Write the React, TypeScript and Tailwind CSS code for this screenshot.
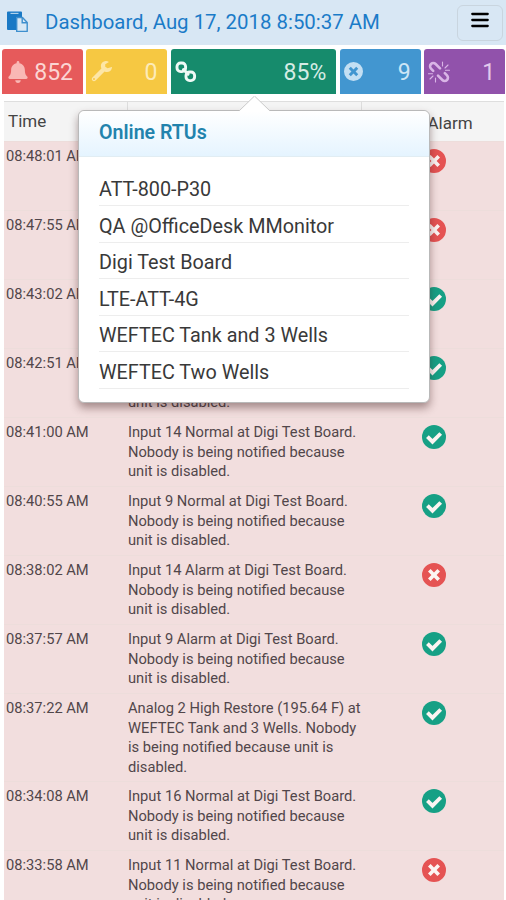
import type { ReactNode } from 'react';
import { FaBell } from 'react-icons/fa';

type Entry = {
    time: string;
    lines: string[];
    ok: boolean;
    height: string;
}

const disabled = ['Nobody is being notified because', 'unit is disabled.'];

const entries: Entry[] = [
    { time: '08:48:01 AM', lines: ['Input 15 Alarm at Digi Test Board.', ...disabled], ok: false, height: 'h-[69px]' },
    { time: '08:47:55 AM', lines: ['Input 12 Alarm at Digi Test Board.', ...disabled], ok: false, height: 'h-[69px]' },
    { time: '08:43:02 AM', lines: ['Input 15 Normal at Digi Test Board.', ...disabled], ok: true, height: 'h-[69px]' },
    { time: '08:42:51 AM', lines: ['Input 12 Normal at Digi Test Board.', ...disabled], ok: true, height: 'h-[69px]' },
    { time: '08:41:00 AM', lines: ['Input 14 Normal at Digi Test Board.', ...disabled], ok: true, height: 'h-[69px]' },
    { time: '08:40:55 AM', lines: ['Input 9 Normal at Digi Test Board.', ...disabled], ok: true, height: 'h-[69px]' },
    { time: '08:38:02 AM', lines: ['Input 14 Alarm at Digi Test Board.', ...disabled], ok: false, height: 'h-[69px]' },
    { time: '08:37:57 AM', lines: ['Input 9 Alarm at Digi Test Board.', ...disabled], ok: true, height: 'h-[69px]' },
    { time: '08:37:22 AM', lines: ['Analog 2 High Restore (195.64 F) at', 'WEFTEC Tank and 3 Wells. Nobody', 'is being notified because unit is', 'disabled.'], ok: true, height: 'h-[88px]' },
    { time: '08:34:08 AM', lines: ['Input 16 Normal at Digi Test Board.', ...disabled], ok: true, height: 'h-[69px]' },
    { time: '08:33:58 AM', lines: ['Input 11 Normal at Digi Test Board.', ...disabled], ok: false, height: 'h-[69px]' },
];

const rtus = ['ATT-800-P30', 'QA @OfficeDesk MMonitor', 'Digi Test Board', 'LTE-ATT-4G', 'WEFTEC Tank and 3 Wells', 'WEFTEC Two Wells'];

function PasteIcon() {
    return (
        <svg viewBox="0 0 22 22" className="mb-[2px] h-[22px] w-[22px]">
            <path d="M1 .5h13a1 1 0 0 1 1 1V6H9v13H1a1 1 0 0 1-1-1V1.500a1 1 0 0 1 1-1Z" fill="#1979c5" />
            <path d="M3.5 2.4h8" stroke="#b9d7ee" strokeWidth="1.1" />
            <path d="M9.700 6.500h5.800l4.700 4.900v9H9.700Z" fill="#d8e8f5" stroke="#3e8fce" strokeWidth="1.4" strokeLinejoin="round" />
            <path d="M15.200 6.500v5.200h5" fill="none" stroke="#3e8fce" strokeWidth="1.4" />
        </svg>
    );
}

function WrenchIcon() {
    return (
        <svg viewBox="0 0 512 512" className="h-[21px] w-[21px]" fill="currentColor">
            <path fillRule="evenodd" d="M507 148c5-9 8 3 3 22-15 60-58 101-119 101-22 0-41-4-60-13L113 476c-23 23-56 23-78 1s-22-54 0-77l219-218c-9-18-13-37-13-59C241 56 293 4 361 1c26-1 50 6 67 17 7 5 6 9-1 13l-80 48v64l57 32ZM73 462a24 24 0 1 0 0-48 24 24 0 0 0 0 48Z" />
        </svg>
    );
}

function LinkIcon() {
    return (
        <svg viewBox="0 0 22 22" className="h-[22px] w-[22px]" fill="none" stroke="currentColor" strokeWidth="2.9">
            <rect x="2" y="2" width="8.6" height="8.6" rx="3.6" />
            <rect x="11" y="11" width="8.6" height="8.6" rx="3.6" />
            <path d="m8.500 8.500 4.600 4.600" strokeLinecap="round" strokeWidth="3" />
        </svg>
    );
}

function UnlinkIcon() {
    return (
        <svg viewBox="0 0 22 22" className="h-[22px] w-[22px]" fill="none" stroke="currentColor" strokeLinecap="round">
            <path d="M5.2 9.8 3 7.6a3.3 3.3 0 0 1 0-4.6 3.3 3.3 0 0 1 4.6 0L12 7.4M16.8 12.2l2.2 2.2a3.3 3.3 0 0 1 0 4.6 3.3 3.3 0 0 1-4.6 0L10 14.6" strokeWidth="2.6" />
            <path d="M14.5 5V1M17 7l3-3M17.5 9.3h4M7.5 17v4M5 15l-3 3M4.5 12.7h-4" strokeWidth="1.1" />
        </svg>
    );
}

function CrossIcon({ className }: { className: string }) {
    return (
        <svg viewBox="0 0 24 24" className={className}>
            <path fillRule="evenodd" fill="currentColor" d="M12 0a12 12 0 1 0 0 24 12 12 0 0 0 0-24Zm-3.4 6 3.4 3.4L15.4 6 18 8.6 14.6 12l3.4 3.4-2.6 2.6-3.4-3.4L8.6 18 6 15.4 9.4 12 6 8.6Z" />
        </svg>
    );
}

function StatusIcon({ ok }: { ok: boolean }) {
    if (!ok) {
        return (
            <span className="h-6 w-6 rounded-full bg-[radial-gradient(#fcf4f2_60%,transparent_61%)] text-[#e55353]">
                <CrossIcon className="h-6 w-6" />
            </span>
        );
    }
    return (
        <svg viewBox="0 0 24 24" className="h-6 w-6">
            <circle cx="12" cy="12" r="12" fill="#16a085" />
            <path d="m5.4 11.6 5.1 5.1 8.2-8.2" fill="none" stroke="#fcf4f2" strokeWidth="3.8" />
        </svg>
    );
}

function Tile({ className, iconClass, icon, value }: { className: string; iconClass: string; icon: ReactNode; value: string }) {
    return (
        <div className={`flex h-[45px] items-center justify-between rounded-t-[3px] pr-[10px] text-[23px] ${className}`}>
            <span className={iconClass}>{icon}</span>
            <span className="pt-[3px]">{value}</span>
        </div>
    );
}

function Popover() {
    return (
        <div className="absolute top-[110px] left-[77.5px] h-[293px] w-[352px] rounded-md border border-[#b9b9b9] bg-white shadow-[0_5px_9px_rgba(60,25,25,0.42)]">
            <svg viewBox="0 0 32 16" className="absolute -top-[15px] left-[160px] h-4 w-8">
                <path d="M0 15 15.5 0 31 15v1H0Z" fill="#fff" />
                <path d="M0 15 15.5 0 31 15" fill="none" stroke="#c9c9c9" />
            </svg>
            <h3 className="h-[46px] rounded-t-md border-b border-[#e1edf3] bg-linear-to-b from-white to-[#e5f4ff] pt-2 pl-[20.5px] text-[19.6px] leading-7 font-semibold text-[#2283ad]">
                Online RTUs
            </h3>
            <ul className="mt-[12.5px] pr-5 pl-[20.5px] text-[19.8px] text-[#393939]">
                {rtus.map((name) => (
                    <li key={name} className="h-[36.5px] border-b border-[#ededed] pt-[3.5px] leading-[33px] whitespace-nowrap">
                        {name}
                    </li>
                ))}
            </ul>
        </div>
    );
}

export default function App() {
    return (
        <div className="relative h-[900px] w-[506px] overflow-hidden bg-white font-['Roboto',sans-serif]">
            <header className="flex h-[45px] items-center bg-[#d8e7f4] pl-[7px]">
                <PasteIcon />
                <h1 className="ml-4 flex-1 text-[20.4px] whitespace-nowrap text-[#1b7bc8]">Dashboard, Aug 17, 2018 8:50:37 AM</h1>
                <button className="mr-[3px] flex h-9 w-[46px] items-center justify-center rounded-md border border-[#c9d5df] text-black">
                    <svg viewBox="0 0 18 16" className="mb-[5px] h-4 w-[18px]" fill="none" stroke="currentColor" strokeWidth="2.3" strokeLinecap="round">
                        <path d="M1.3 2h15.4M1.3 8h15.4M1.3 14h15.4" />
                    </svg>
                </button>
            </header>

            <div className="mt-1 grid grid-cols-[81px_81px_165.5px_81px_81px] gap-[3.4px] pl-[2px]">
                <Tile className="bg-[#e65a5b] pl-[5px] text-[#fbd5d3]" iconClass="text-[#f9b8b5]" icon={<FaBell size={22} />} value="852" />
                <Tile className="bg-[#f6c842] pl-[5px] text-[#fdebb8]" iconClass="text-[#fde6a6]" icon={<WrenchIcon />} value="0" />
                <Tile className="bg-[#168b6c] pl-[4px] text-[#d5ece5]" iconClass="text-[#effaf6]" icon={<LinkIcon />} value="85%" />
                <Tile className="bg-[#4296d0] pl-[4px] text-[#cce5f6]" iconClass="text-[#c3dff3]" icon={<CrossIcon className="h-[19px] w-[19px]" />} value="9" />
                <Tile className="bg-[#9152ab] pl-[4px] text-[#e2c9ec]" iconClass="text-[#d9b5e6]" icon={<UnlinkIcon />} value="1" />
            </div>

            <div className="mt-[7px] ml-1 w-[500px] border-t border-[#dedede]">
                <div className="grid h-[39px] grid-cols-[124px_233.5px_142.5px] bg-[#f4f4f4] text-[17px] text-[#444]">
                    <span className="border-r border-[#ddd] pt-[7px] pl-1">Time</span>
                    <span className="border-r border-[#ddd]" />
                    <span className="pt-[9px] pl-[66px]">Alarm</span>
                </div>
                {entries.map((entry) => (
                    <div key={entry.time} className={`grid grid-cols-[123px_294.5px_1fr] border-t border-[#eddddb] bg-[#f2dede] text-[14.7px] leading-[19.7px] text-[#51464a] ${entry.height}`}>
                        <span className="pt-[5px] pl-0.5">{entry.time}</span>
                        <div className="pt-[5px] pl-px whitespace-nowrap">
                            {entry.lines.map((line) => <p key={line}>{line}</p>)}
                        </div>
                        <div className="flex pt-[7px]"><StatusIcon ok={entry.ok} /></div>
                    </div>
                ))}
            </div>

            <Popover />
        </div>
    );
}
